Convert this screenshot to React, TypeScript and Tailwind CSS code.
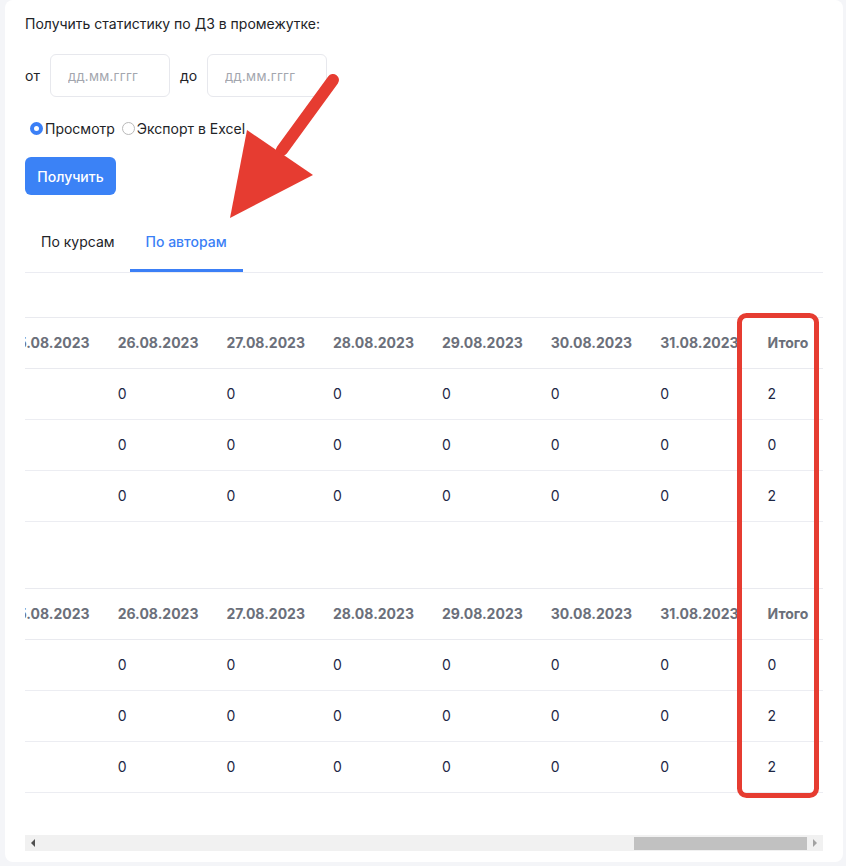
import React, { useLayoutEffect, useRef, useState } from "react";

const dates = Array.from(
  { length: 31 },
  (_, i) => `${String(i + 1).padStart(2, "0")}.08.2023`
);

const tables = [
  {
    id: 1,
    rows: [
      { name: "Иванова А.", total: 2 },
      { name: "Петров С.", total: 0 },
      { name: "Смирнова Е.", total: 2 },
    ],
  },
  {
    id: 2,
    rows: [
      { name: "Кузнецов Д.", total: 0 },
      { name: "Орлова М.", total: 2 },
      { name: "Волков И.", total: 2 },
    ],
  },
];

const StatsTable = ({ rows }: { rows: { name: string; total: number }[] }) => (
  <table className="w-full border-collapse text-[14px] leading-5">
    <thead>
      <tr className="border-y border-[#e9eaef]">
        <th className="w-[140px] min-w-[140px] px-[14px] py-[15px] text-left font-bold text-[#6b6f7a] whitespace-nowrap">
          Автор
        </th>
        {dates.map((d) => (
          <th
            key={d}
            className="px-[14px] py-[15px] text-left font-bold text-[#6b6f7a] whitespace-nowrap"
          >
            {d}
          </th>
        ))}
        <th className="px-[15px] py-[15px] text-left font-bold text-[#6b6f7a] whitespace-nowrap">
          Итого
        </th>
      </tr>
    </thead>
    <tbody>
      {rows.map((row) => (
        <tr key={row.name} className="border-b border-[#ecedf2]">
          <td className="px-[14px] py-[15px] text-[#1d2745] whitespace-nowrap">
            {row.name}
          </td>
          {dates.map((d) => (
            <td key={d} className="px-[14px] py-[15px] text-[#1d2745]">
              0
            </td>
          ))}
          <td className="px-[15px] py-[15px] text-[#1d2745]">{row.total}</td>
        </tr>
      ))}
    </tbody>
  </table>
);

const App = () => {
  const [mode, setMode] = useState("view");
  const [tab, setTab] = useState("authors");
  const scrollRef = useRef<HTMLDivElement>(null);

  useLayoutEffect(() => {
    if (scrollRef.current) {
      scrollRef.current.scrollLeft = scrollRef.current.scrollWidth;
    }
  }, []);

  return (
    <div className="relative min-h-screen bg-[#f4f5f8] pl-[5px] pr-[3px] font-[Inter,'Noto_Sans',sans-serif]">
      <div className="rounded-lg bg-white px-5 pt-[14px] pb-[11px]">
        <p className="text-[14px] leading-5 text-[#222327]">
          Получить статистику по ДЗ в промежутке:
        </p>

        {/* Date range */}
        <div className="mt-5 flex items-center gap-[10px] text-[14px] text-[#222327]">
          <span>от</span>
          <input
            type="text"
            placeholder="дд.мм.гггг"
            className="h-[43px] w-[120px] rounded-md border border-[#e7e8ed] pl-[17px] text-[13px] tracking-[0.3px] outline-none placeholder:text-[#a3a6ae]"
          />
          <span>до</span>
          <input
            type="text"
            placeholder="дд.мм.гггг"
            className="h-[43px] w-[120px] rounded-md border border-[#e7e8ed] pl-[17px] text-[13px] tracking-[0.3px] outline-none placeholder:text-[#a3a6ae]"
          />
        </div>

        {/* Mode */}
        <div className="mt-[21px] flex h-5 items-center gap-[7px] text-[14px] text-[#222327]">
          <label className="flex items-center gap-[2px]">
            <input
              type="radio"
              name="mode"
              checked={mode === "view"}
              onChange={() => setMode("view")}
              className="ml-[5px] h-[13px] w-[13px] appearance-none rounded-full border border-[#b9b9b9] bg-white checked:border-[4px] checked:border-[#3b7ff6]"
            />
            Просмотр
          </label>
          <label className="flex items-center gap-[2px]">
            <input
              type="radio"
              name="mode"
              checked={mode === "excel"}
              onChange={() => setMode("excel")}
              className="h-[13px] w-[13px] appearance-none rounded-full border border-[#b9b9b9] bg-white checked:border-[4px] checked:border-[#3b7ff6]"
            />
            Экспорт в Excel
          </label>
        </div>

        <button className="mt-[19px] h-[38px] w-[91px] rounded-md bg-[#3b82f6] text-[14px] font-medium text-white">
          Получить
        </button>

        {/* Tabs */}
        <div className="mt-5 flex border-b border-[#ebecf2] text-[14px] leading-5">
          <button
            onClick={() => setTab("courses")}
            className={`border-b-[3px] pl-4 pr-[15px] pt-[17px] pb-[17px] ${
              tab === "courses"
                ? "border-[#3b7ff6] font-medium text-[#3b7ff6]"
                : "border-transparent text-[#222327]"
            }`}
          >
            По курсам
          </button>
          <button
            onClick={() => setTab("authors")}
            className={`border-b-[3px] px-4 pt-[17px] pb-[17px] ${
              tab === "authors"
                ? "border-[#3b7ff6] font-medium text-[#3b7ff6]"
                : "border-transparent text-[#222327]"
            }`}
          >
            По авторам
          </button>
        </div>

        {/* Tables */}
        <div ref={scrollRef} className="overflow-hidden">
          <div className="w-max pt-[44px] pb-[42px]">
            {tables.map((t, i) => (
              <div key={t.id} className={i > 0 ? "mt-[66px]" : ""}>
                <StatsTable rows={t.rows} />
              </div>
            ))}
          </div>
        </div>

        {/* Scrollbar */}
        <div className="flex h-4 items-center bg-[#f1f1f1]">
          <div className="flex h-4 w-[15px] items-center justify-center">
            <div className="h-0 w-0 border-y-[4px] border-r-[4px] border-y-transparent border-r-[#505050]" />
          </div>
          <div className="flex h-4 flex-1 items-center justify-end">
            <div className="h-[13px] w-[173px] bg-[#c1c1c1]" />
          </div>
          <div className="flex h-4 w-4 items-center justify-center">
            <div className="h-0 w-0 border-y-[4px] border-l-[4px] border-y-transparent border-l-[#a3a3a3]" />
          </div>
        </div>
      </div>

      {/* Annotations */}
      <svg
        className="pointer-events-none absolute inset-0 h-full w-full"
        viewBox="0 0 846 866"
        preserveAspectRatio="none"
      >
        <line
          x1="333"
          y1="80"
          x2="282"
          y2="150"
          stroke="#e63c31"
          strokeWidth="12"
          strokeLinecap="round"
        />
        <polygon points="247,130 313,175 230,218" fill="#e63c31" />
        <rect
          x="739.5"
          y="315.5"
          width="77"
          height="480"
          rx="7"
          fill="none"
          stroke="#e63c31"
          strokeWidth="5"
        />
      </svg>
    </div>
  );
};

export default App;
